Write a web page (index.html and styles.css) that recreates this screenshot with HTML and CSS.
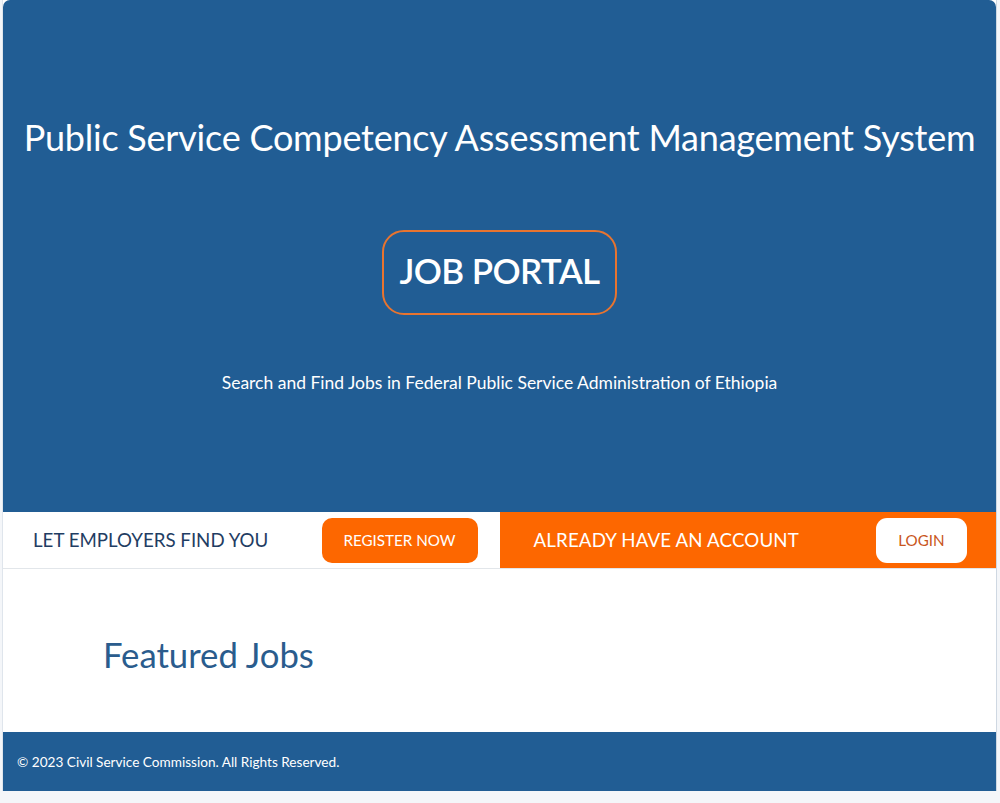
FILE: index.html
```html
<!DOCTYPE html>
<html lang="en">
<head>
<meta charset="utf-8">
<title>Job Portal</title>
<link rel="stylesheet" href="styles.css">
</head>
<body>
<div class="page">
  <header class="hero">
    <h1 class="hero-title">Public Service Competency Assessment Management System</h1>
    <div class="portal-badge">JOB PORTAL</div>
    <p class="hero-sub">Search and Find Jobs in Federal Public Service Administration of Ethiopia</p>
  </header>
  <section class="cta">
    <div class="cta-half cta-left">
      <span class="cta-text">LET EMPLOYERS FIND YOU</span>
      <a class="btn btn-register" href="#">REGISTER NOW</a>
    </div>
    <div class="cta-half cta-right">
      <span class="cta-text">ALREADY HAVE AN ACCOUNT</span>
      <a class="btn btn-login" href="#">LOGIN</a>
    </div>
  </section>
  <main class="featured">
    <h2 class="featured-title">Featured Jobs</h2>
  </main>
  <footer class="footer">
    <p class="footer-text">© 2023 Civil Service Commission. All Rights Reserved.</p>
  </footer>
</div>
</body>
</html>
```
FILE: styles.css
```css
* { box-sizing: border-box; }
html, body { margin: 0; padding: 0; }
body {
  background: #f4f6f9;
  font-family: Lato, "Open Sans", "Liberation Sans", sans-serif;
  height: 803px;
  overflow: hidden;
}
.page {
  margin: 0 3px 0 2px;
  background: #fff;
  border-left: 1px solid #dfe5ec;
  border-right: 1px solid #cfd8e2;
  display: flex;
  flex-direction: column;
}
.hero {
  background: #215d94;
  height: 512px;
  border-radius: 7px 7px 0 0;
  display: flex;
  flex-direction: column;
  align-items: center;
  padding-top: 115px;
  color: #fff;
}
.hero-title {
  margin: 0;
  font-size: 36px;
  line-height: 44px;
  font-weight: 400;
  letter-spacing: -0.22px;
  white-space: nowrap;
}
.portal-badge {
  margin-top: 71px;
  height: 85px;
  width: 235px;
  border: 2px solid #e8742f;
  border-radius: 22px;
  display: flex;
  align-items: center;
  justify-content: center;
  padding-bottom: 6px;
  font-size: 35px;
  font-weight: 600;
  letter-spacing: -0.6px;
}
.hero-sub {
  margin: 58px 0 0;
  font-size: 17.5px;
  line-height: 20px;
}
.cta {
  display: flex;
  height: 57px;
  border-bottom: 1px solid #e2e6ea;
}
.cta-half {
  flex: 0 0 50%;
  min-width: 0;
  display: flex;
  align-items: center;
  justify-content: space-between;
}
.cta-left {
  background: #fff;
  padding: 0 22px 0 30px;
}
.cta-right {
  background: #fd6700;
  padding: 0 29px 0 34px;
}
.cta-text {
  font-size: 18.7px;
  letter-spacing: 0;
}
.cta-right .cta-text { letter-spacing: 0.15px; }
.cta-left .cta-text { color: #1f3d63; }
.cta-right .cta-text { color: #fff; }
.btn {
  height: 45px;
  display: flex;
  align-items: center;
  justify-content: center;
  text-decoration: none;
  font-size: 15.2px;
}
.btn-register {
  width: 156px;
  background: #fd6700;
  color: #fff;
  border-radius: 10px;
}
.btn-login {
  width: 91px;
  background: #fff;
  color: #c9561c;
  border-radius: 11px;
}
.featured {
  height: 163px;
  padding: 8px 0 0 100px;
  display: flex;
  align-items: center;
}
.featured-title {
  margin: 0;
  font-size: 34.7px;
  font-weight: 400;
  color: #2a5c8d;
}
.footer {
  background: #215d94;
  height: 59px;
  display: flex;
  align-items: center;
  padding-left: 14px;
}
.footer-text {
  margin: 0;
  color: #fff;
  font-size: 13.6px;
}
```
